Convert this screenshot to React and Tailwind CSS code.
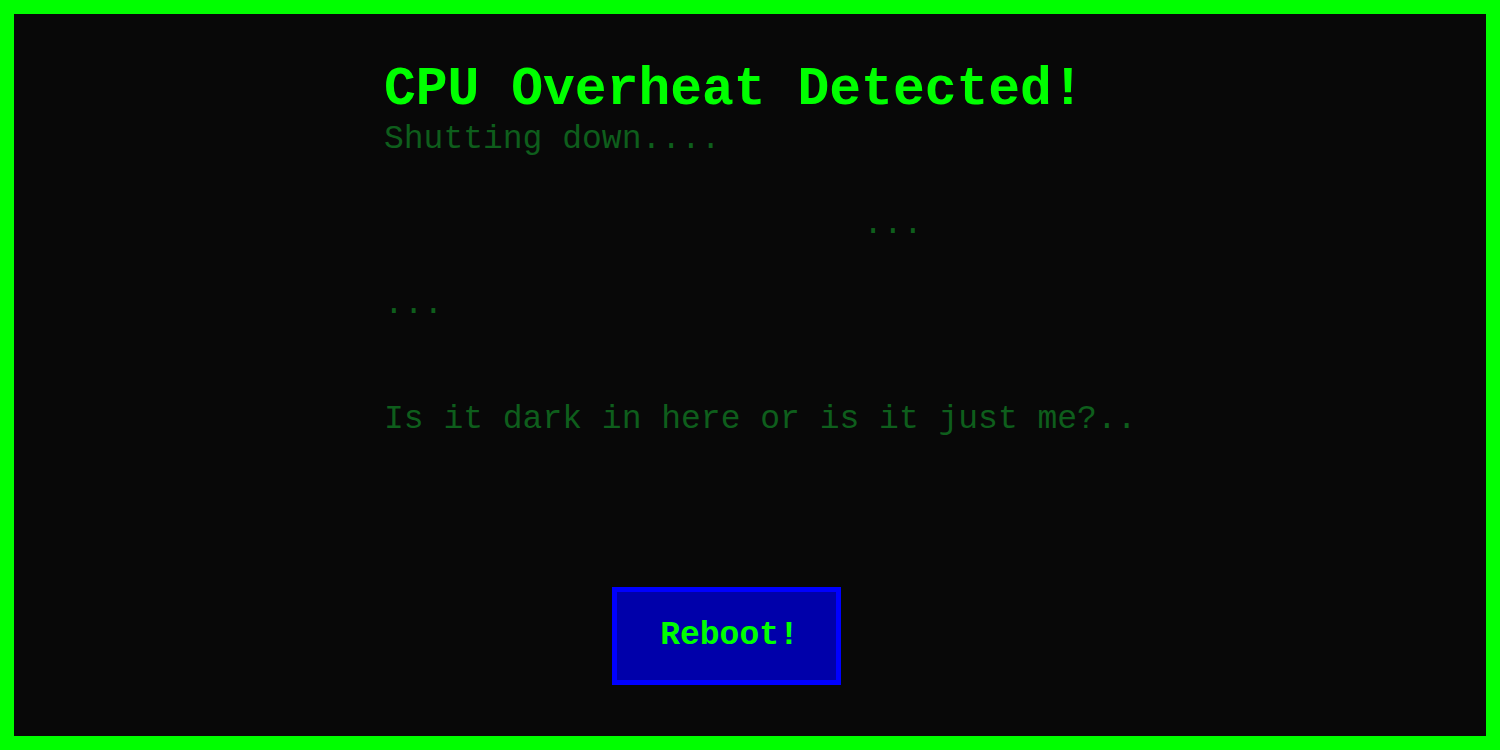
export default function App() {
  const mono = { fontFamily: '"Liberation Mono", "DejaVu Sans Mono", monospace' };
  return (
    <div
      className="box-border h-[750px] w-full border-[14px] border-[#00ff00] bg-[#080808] pl-[370px] pt-[50px]"
      style={mono}
    >
      <h1 className="text-[53px] font-bold leading-[53px] text-[#00ff00]">CPU Overheat Detected!</h1>
      <div className="text-[33px] leading-[40px] text-[#0e5e1c]">
        <p className="mt-[3px]">Shutting down....</p>
        <p className="ml-[4px] mt-[45px] whitespace-pre">{"                        ..."}</p>
        <p className="mt-[40px] whitespace-pre">{"..."}</p>
        <p className="mt-[75px]">Is it dark in here or is it just me?..</p>
      </div>
      <button className="ml-[228px] mt-[147px] flex h-[98px] w-[229px] items-center justify-center border-[5px] border-[#0000ff] bg-[#0000aa] pl-[6px] text-[33px] font-bold text-[#00ff00]">
        Reboot!
      </button>
    </div>
  );
}
